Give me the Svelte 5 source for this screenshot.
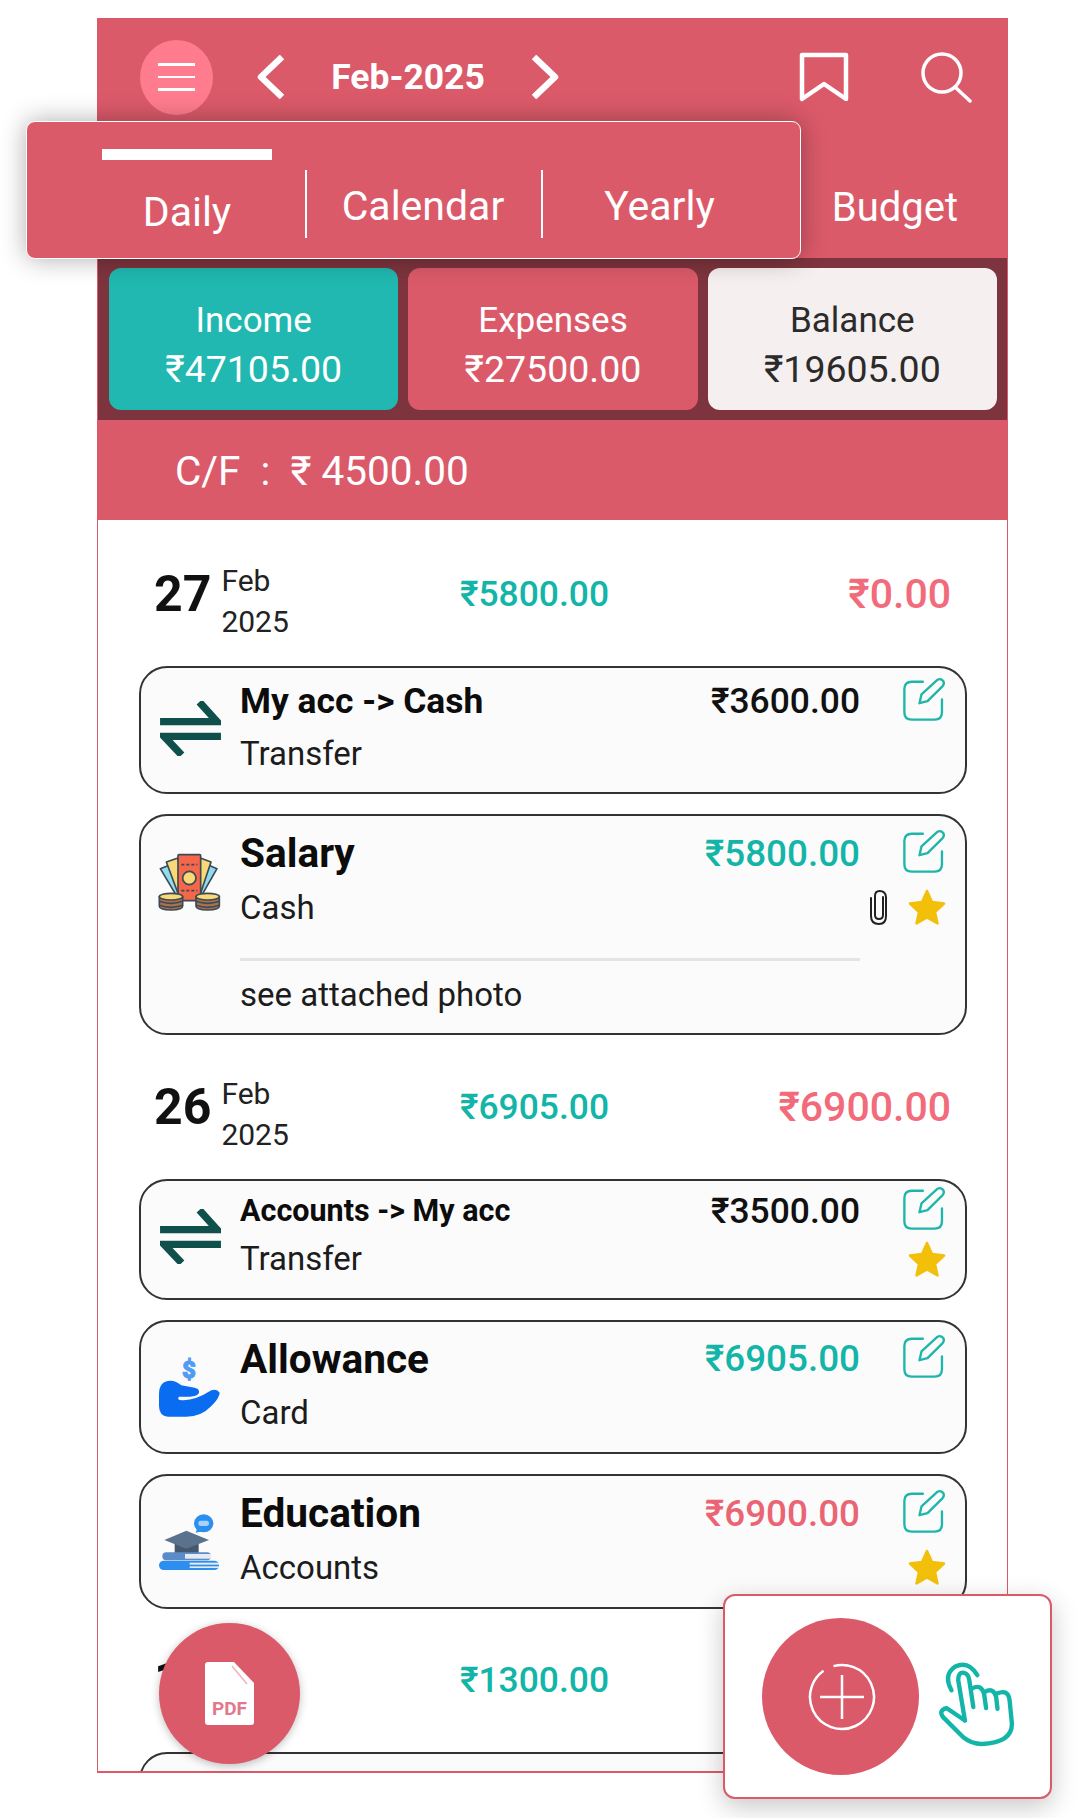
<script>
  const summary = [
    { label: 'Income', value: '₹47105.00', cls: 'inc' },
    { label: 'Expenses', value: '₹27500.00', cls: 'exp' },
    { label: 'Balance', value: '₹19605.00', cls: 'bal' }
  ];

  const groups = [
    {
      day: '27', income: '₹5800.00', expense: '₹0.00',
      rows: [
        { icon: 'transfer', title: 'My acc -> Cash', sub: 'Transfer', amount: '₹3600.00', kind: 'plain', size: 'mid', titleCls: 'medium' },
        { icon: 'salary', title: 'Salary', sub: 'Cash', amount: '₹5800.00', kind: 'in', size: 'tall', titleCls: 'large', clip: true, star: true, note: 'see attached photo' }
      ]
    },
    {
      day: '26', income: '₹6905.00', expense: '₹6900.00',
      rows: [
        { icon: 'transfer', title: 'Accounts -> My acc', sub: 'Transfer', amount: '₹3500.00', kind: 'plain', size: 'slim', titleCls: 'small', star: true },
        { icon: 'allowance', title: 'Allowance', sub: 'Card', amount: '₹6905.00', kind: 'in', size: 'tall', titleCls: 'large' },
        { icon: 'education', title: 'Education', sub: 'Accounts', amount: '₹6900.00', kind: 'out', size: 'tall', titleCls: 'large', star: true }
      ]
    }
  ];
</script>

{#snippet editIcon()}
  <svg class="edit" viewBox="150 25 140 140" width="47" height="47" fill="none" stroke="#1fb5ab" stroke-width="7" stroke-linecap="round" stroke-linejoin="round">
    <path d="M218 42H185Q163 42 163 64V133Q163 155 185 155H253Q275 155 275 133V95" />
    <path d="M208 106L214 80L262 36Q271 31 279 40Q283 48 277 55L232 100Z" />
  </svg>
{/snippet}

{#snippet starIcon()}
  <svg class="star" viewBox="0 0 40 38" width="40" height="38">
    <polygon points="20,3 25,14 37,15.5 28,24 30.5,35.5 20,29.5 9.5,35.5 12,24 3,15.5 15,14" fill="#f2bf0a" stroke="#f2bf0a" stroke-width="2.5" stroke-linejoin="round" />
  </svg>
{/snippet}

{#snippet clipIcon()}
  <svg class="clip" viewBox="0 0 20 38" width="20" height="38" fill="none" stroke="#222" stroke-width="2" stroke-linecap="round">
    <path d="M14 9V27Q14 31 10 31Q6 31 6 27V8Q6 3 10.500 3Q16.500 3 17 9V28Q17 36 10 36Q2 36 2 28V10" />
  </svg>
{/snippet}

{#snippet catIcon(name)}
  {#if name === 'transfer'}
    <svg class="cat arrows" viewBox="0 0 62 56" width="61" height="55" fill="none" stroke="#0f4f4c" stroke-width="7.500">
      <path d="M0 21H58L40 1" />
      <path d="M62 36H4L22 55" />
    </svg>
  {:else if name === 'salary'}
    <svg class="cat" viewBox="52 62 192 180" width="64" height="60" stroke="#3d4a55" stroke-width="5" stroke-linejoin="round">
      <path d="M62 112L92 100L125 190L112 196Z" fill="#8fdcf0" />
      <path d="M232 112L204 100L172 190L184 196Z" fill="#8fdcf0" />
      <path d="M80 92L115 80L130 190L118 194Z" fill="#f9d877" />
      <path d="M214 92L182 80L170 190L180 194Z" fill="#f9d877" />
      <rect x="115" y="70" width="68" height="138" rx="3" fill="#f4674a" />
      <circle cx="149" cy="140" r="20" fill="#f9d877" />
      <path d="M125 100h48M125 178h48" stroke-dasharray="9 6" />
      <path d="M59 196V224Q59 236 94 236Q129 236 129 224V196Z" fill="#a9714d" />
      <path d="M59 210Q94 222 129 210M59 222Q94 234 129 222" fill="none" />
      <ellipse cx="94" cy="196" rx="35" ry="10" fill="#f9d877" />
      <path d="M169 196V224Q169 236 204 236Q239 236 239 224V196Z" fill="#a9714d" />
      <path d="M169 210Q204 222 239 210M169 222Q204 234 239 222" fill="none" />
      <ellipse cx="204" cy="196" rx="35" ry="10" fill="#f9d877" />
    </svg>
  {:else if name === 'allowance'}
    <svg class="cat" viewBox="52 50 192 186" width="64" height="62">
      <text x="148" y="116" text-anchor="middle" font-size="72" font-weight="900" fill="#4f9bf5" stroke="#4f9bf5" stroke-width="3" font-family="Roboto, sans-serif">$</text>
      <path d="M58 165Q58 125 92 124Q110 124 125 138L165 145Q180 148 178 160Q175 170 150 172L118 172Q112 178 120 182Q160 188 215 153Q232 147 240 160Q240 175 215 200Q185 232 140 232L85 232Q58 230 58 200Z" fill="#0a6cf0" />
    </svg>
  {:else}
    <svg class="cat" viewBox="52 66 192 180" width="64" height="60">
      <ellipse cx="192" cy="100" rx="29" ry="27" fill="#2c8fef" />
      <path d="M172 116L168 128L188 124Z" fill="#2c8fef" />
      <rect x="176" y="92" width="32" height="16" rx="7" fill="#a9d2f8" />
      <rect x="105" y="150" width="72" height="42" fill="#44586f" />
      <path d="M74 150L140 122L208 150L140 176Z" fill="#5a728e" />
      <rect x="68" y="187" width="146" height="24" rx="12" fill="#5b8cc8" />
      <rect x="136" y="192" width="78" height="14" fill="#e6ebf2" />
      <rect x="58" y="212" width="180" height="28" rx="14" fill="#2c8fef" />
      <rect x="150" y="218" width="88" height="6" fill="#e6ebf2" />
      <rect x="150" y="229" width="88" height="5" fill="#e6ebf2" />
    </svg>
  {/if}
{/snippet}

<div class="stage">
  <main class="phone">
    <header class="topbar">
      <button class="menu" aria-label="menu">
        <span></span><span></span><span></span>
      </button>
      <svg class="chev first" viewBox="0 0 28 44" width="28" height="44" fill="none" stroke="#fff" stroke-width="6.500" stroke-linejoin="round"><path d="M25 2L4 22L25 42" /></svg>
      <div class="month">Feb-2025</div>
      <svg class="chev" viewBox="0 0 28 44" width="28" height="44" fill="none" stroke="#fff" stroke-width="6.500" stroke-linejoin="round"><path d="M3 2L24 22L3 42" /></svg>
      <svg class="bookmark" viewBox="0 0 50 50" width="50" height="50" fill="none" stroke="#fff" stroke-width="4.500" stroke-linejoin="round"><path d="M3 3H47V47L25 32L3 47Z" /></svg>
      <svg class="search" viewBox="0 0 52 52" width="52" height="52" fill="none" stroke="#fff" stroke-width="3.500" stroke-linecap="round"><circle cx="22" cy="22" r="19" /><path d="M35 36L50 50" /></svg>
    </header>

    <div class="tabrow">
      <div class="budget">Budget</div>
    </div>

    <section class="strip">
      {#each summary as s}
        <div class="stat {s.cls}">
          <div class="stat-label">{s.label}</div>
          <div class="stat-value">{s.value}</div>
        </div>
      {/each}
    </section>

    <div class="carry">C/F &nbsp;:&nbsp; ₹ 4500.00</div>

    {#each groups as g}
      <div class="dayhead">
        <div class="date">
          <span class="daynum">{g.day}</span>
          <span class="monthyear">Feb<br />2025</span>
        </div>
        <div class="dayin">{g.income}</div>
        <div class="dayout">{g.expense}</div>
      </div>
      {#each g.rows as r}
        <article class="card {r.size}">
          <div class="main">
            <div class="catcell">{@render catIcon(r.icon)}</div>
            <div class="title {r.titleCls}">{r.title}</div>
            <div class="amount {r.kind}">{r.amount}</div>
            <div class="rightcell">{@render editIcon()}</div>
            <div class="sub">{r.sub}</div>
            <div class="rightcell lower">
              {#if r.clip}{@render clipIcon()}{/if}
              {#if r.star}{@render starIcon()}{/if}
            </div>
          </div>
          {#if r.note}
            <div class="note">{r.note}</div>
          {/if}
        </article>
      {/each}
    {/each}

    <div class="dayhead">
      <div class="date"><span class="daynum">19</span></div>
      <div class="dayin">₹1300.00</div>
      <div class="dayout"></div>
    </div>
    <article class="card tall"><div class="main"></div></article>
  </main>

  <nav class="tabs">
    <div class="tab daily"><i class="marker"></i>Daily</div>
    <div class="tab">Calendar</div>
    <div class="tab yearly">Yearly</div>
  </nav>

  <div class="pdf-fab">
    <svg viewBox="0 0 49 63" width="49" height="63">
      <path d="M3 0H29L49 21V60Q49 63 46 63H3Q0 63 0 60V3Q0 0 3 0Z" fill="#fff" />
      <path d="M27 4L42 22" stroke="#eeb3bc" stroke-width="1.500" />
      <text x="24.500" y="53" text-anchor="middle" font-size="19" font-weight="700" fill="#e2788a" font-family="Roboto, sans-serif">PDF</text>
    </svg>
  </div>

  <div class="addbox">
    <div class="addbtn">
      <svg viewBox="0 0 70 70" width="70" height="70" fill="none" stroke="#fff" stroke-width="2.500">
        <circle cx="35" cy="35" r="32" stroke-dasharray="170 11" transform="rotate(-70 35 35)" />
        <path d="M13 35H57M35 13V57" />
      </svg>
    </div>
    <svg class="hand" viewBox="70 50 250 280" width="84" height="94" fill="none" stroke="#12b5a8" stroke-width="13" stroke-linecap="round" stroke-linejoin="round">
      <path d="M125 155Q100 110 135 85Q175 65 202 110" />
      <path d="M165 245L145 125Q145 100 162 103Q175 105 178 125L190 205" />
      <path d="M186 150Q212 135 222 165L228 208" />
      <path d="M224 160Q250 145 258 175L262 210" />
      <path d="M260 165Q294 150 298 185L305 255Q305 312 215 315Q185 315 160 295L100 235Q85 215 110 208L165 245" />
    </svg>
  </div>
</div>

<style>
  :global(body) {
    margin: 0;
    background: #fff;
    font-family: Roboto, 'Liberation Sans', sans-serif;
  }

  .stage {
    position: relative;
    width: 1080px;
    height: 1818px;
    overflow: hidden;
    padding-top: 18px;
    box-sizing: border-box;
  }

  .phone {
    width: 911px;
    height: 1755px;
    margin-left: 97px;
    box-sizing: border-box;
    background: #fff;
    border: 1.5px solid #db5a6a;
    border-bottom-width: 2.5px;
    overflow: hidden;
  }

  .topbar {
    display: flex;
    align-items: center;
    height: 100px;
    box-sizing: border-box;
    padding: 16px 35px 0 42px;
    background: #db5a6a;
    position: relative;
  }

  .menu {
    width: 73px;
    height: 75px;
    border: none;
    border-radius: 50%;
    background: #ff7c8e;
    display: flex;
    flex-direction: column;
    align-items: center;
    justify-content: center;
    gap: 10px;
    padding: 0;
    flex: none;
  }

  .menu span {
    width: 37px;
    height: 2.5px;
    background: #fff;
  }

  .chev.first {
    margin-left: 44px;
  }

  .month {
    width: 246px;
    text-align: center;
    font-size: 35.5px;
    font-weight: 700;
    color: #fff;
  }

  .bookmark {
    margin-left: auto;
  }

  .search {
    margin-left: 71px;
  }

  .tabrow {
    height: 139px;
    display: flex;
    justify-content: flex-end;
    align-items: center;
    padding: 0 49px 0 0;
    background: #db5a6a;
    color: #fff;
  }

  .budget {
    font-size: 40px;
    margin-top: 38px;
  }

  .strip {
    display: grid;
    grid-template-columns: repeat(3, 1fr);
    gap: 10px;
    height: 162px;
    padding: 10px 10px 10px 11px;
    box-sizing: border-box;
    background: #7e343e;
  }

  .stat {
    border-radius: 12px;
    text-align: center;
    display: flex;
    flex-direction: column;
    justify-content: center;
    gap: 6px;
    padding-top: 12px;
    box-sizing: border-box;
    color: #fff;
  }

  .stat-label {
    font-size: 35px;
    line-height: 42px;
  }

  .stat-value {
    font-size: 37.5px;
    line-height: 42px;
  }

  .inc {
    background: #20b8b0;
  }

  .exp {
    background: #db5a6a;
  }

  .bal {
    background: #f5efef;
    color: #2b2b2b;
  }

  .carry {
    height: 100px;
    line-height: 102px;
    padding-left: 77px;
    background: #db5a6a;
    color: #fff;
    font-size: 40.5px;
    white-space: pre;
  }

  .dayhead {
    height: 144px;
    display: grid;
    grid-template-columns: 306px auto 1fr;
    align-items: center;
    padding: 0 56px 0 56px;
    box-sizing: border-box;
  }

  .carry + .dayhead {
    height: 146px;
    padding-top: 2px;
  }

  .card:has(+ .dayhead) + .dayhead:last-of-type {
    height: 143px;
  }

  .date {
    display: flex;
    align-items: center;
    gap: 10px;
  }

  .daynum {
    font-size: 50px;
    font-weight: 700;
    color: #111;
  }

  .monthyear {
    font-size: 30px;
    line-height: 41px;
    color: #222;
    position: relative;
    top: 7px;
  }

  .dayin {
    font-size: 35.4px;
    font-weight: 500;
    color: #12b5a8;
  }

  .dayout {
    font-size: 41px;
    font-weight: 500;
    text-align: right;
    color: #f26b7a;
  }

  .card {
    margin: 0 40px 20px 41px;
    border: 2px solid #333;
    border-radius: 28px;
    background: #fbfbfb;
  }

  .card:has(+ .dayhead) {
    margin-bottom: 0;
  }

  .main {
    display: grid;
    grid-template-columns: 99px 1fr auto 105px;
    grid-template-rows: var(--row) var(--row);
    align-items: center;
  }

  .mid {
    --row: 52px;
    padding: 7px 0 13px;
  }

  .tall {
    --row: 54px;
    padding: 10px 0 12.5px;
  }

  .slim {
    --row: 48px;
    padding: 6px 0 15px;
  }

  .catcell {
    grid-row: 1 / 3;
    display: flex;
    padding: 3px 0 0 16px;
    align-self: center;
  }

  .cat {
    display: block;
  }

  .arrows {
    margin-left: 3px;
  }

  .title {
    color: #0c0c0c;
    font-weight: 700;
    white-space: nowrap;
  }

  .title.large {
    font-size: 40.6px;
  }

  .title.medium {
    font-size: 35.4px;
  }

  .title.small {
    font-size: 30.5px;
  }

  .amount {
    font-size: 36.8px;
    font-weight: 500;
  }

  .plain {
    font-size: 35.4px;
    color: #111;
  }

  .in {
    color: #12b5a8;
  }

  .out {
    color: #ea6474;
  }

  .sub {
    grid-column: 2 / 4;
    font-size: 33px;
    color: #1c1c1c;
  }

  .rightcell {
    display: flex;
    justify-content: flex-end;
    align-items: center;
    gap: 18px;
    padding-right: 18px;
  }

  .edit {
    margin-top: -4px;
    display: block;
  }

  .star,
  .clip {
    display: block;
  }

  .note {
    margin: 24px 105px 0 99px;
    padding-top: 13px;
    border-top: 3px solid #e4e4e4;
    font-size: 33px;
    line-height: 42px;
    color: #1c1c1c;
    padding-bottom: 4px;
  }

  .tabs {
    position: absolute;
    left: 26px;
    top: 121px;
    width: 775px;
    height: 138px;
    box-sizing: border-box;
    display: grid;
    grid-template-columns: 278px 236px 1fr;
    background: #db5a6a;
    border: 1.5px solid #fff;
    border-radius: 9px;
    box-shadow: 0 0 26px rgba(0, 0, 0, 0.32);
    color: #fff;
    font-size: 41px;
  }

  .tab {
    position: relative;
    text-align: center;
    padding-top: 59px;
    line-height: 50px;
  }

  .tab + .tab::before {
    content: '';
    position: absolute;
    left: 0;
    top: 48px;
    height: 68px;
    width: 2px;
    background: #fff;
  }

  .tab.daily {
    padding-top: 65px;
    padding-left: 42px;
  }

  .tab.yearly {
    padding-right: 22px;
  }

  .marker {
    position: absolute;
    left: 75px;
    top: 27px;
    width: 170px;
    height: 11px;
    background: #fff;
  }

  .pdf-fab {
    position: absolute;
    left: 159px;
    top: 1623px;
    width: 141px;
    height: 141px;
    border-radius: 50%;
    background: #db5a6a;
    box-shadow: 0 2px 8px rgba(0, 0, 0, 0.25);
    display: flex;
    align-items: center;
    justify-content: center;
  }

  .addbox {
    position: absolute;
    left: 723px;
    top: 1594px;
    width: 329px;
    height: 205px;
    box-sizing: border-box;
    background: #fff;
    border: 2px solid #db5a6a;
    border-radius: 12px;
    box-shadow: 0 8px 26px rgba(0, 0, 0, 0.22);
    display: flex;
    align-items: center;
    padding-left: 37px;
    gap: 14px;
  }

  .addbtn {
    width: 157px;
    height: 157px;
    flex: none;
    border-radius: 50%;
    background: #db5a6a;
    display: flex;
    align-items: center;
    justify-content: center;
  }

  .addbtn svg {
    margin-left: 2px;
  }

  .hand {
    margin-top: 10px;
  }
</style>
